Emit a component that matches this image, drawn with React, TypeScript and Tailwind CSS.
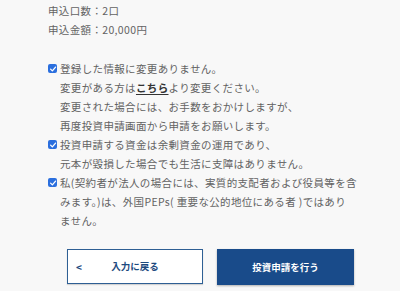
import React from 'react';

const Check = () => (
  <span className="mt-[5px] mr-[3px] flex h-[9px] w-[9px] shrink-0 items-center justify-center rounded-[2px] bg-[#2b6fde]">
    <svg viewBox="0 0 10 10" className="h-[8px] w-[8px]">
      <path d="M2 5.2 L4.2 7.4 L8.2 2.6" fill="none" stroke="#fff" strokeWidth="1.6" strokeLinecap="round" strokeLinejoin="round" />
    </svg>
  </span>
);

export default function App() {
  return (
    <div
      className="h-[291px] w-[400px] overflow-hidden bg-[#f8f8f8] pl-[48px] text-[10.5px] leading-[19px] tracking-[0.35px] text-[#636363]"
      style={{ fontFamily: '"Noto Sans CJK JP", "Noto Sans", sans-serif' }}
    >
      <div className="pt-[1px]">
        <p>申込口数：2口</p>
        <p>申込金額：20,000円</p>
      </div>

      <div className="mt-[20px]">
        <div className="flex">
          <Check />
          <div>
            <p>登録した情報に変更ありません。</p>
            <p>
              変更がある方は
              <a className="font-semibold text-[#333] underline underline-offset-2">こちら</a>
              より変更ください。
            </p>
            <p>変更された場合には、お手数をおかけしますが、</p>
            <p>再度投資申請画面から申請をお願いします。</p>
          </div>
        </div>
        <div className="flex">
          <Check />
          <div>
            <p>投資申請する資金は余剰資金の運用であり、</p>
            <p>元本が毀損した場合でも生活に支障はありません。</p>
          </div>
        </div>
        <div className="flex">
          <Check />
          <div>
            <p className="whitespace-nowrap">私(契約者が法人の場合には、実質的支配者および役員等を含</p>
            <p className="whitespace-nowrap">みます。)は、外国PEPs( 重要な公的地位にある者 )ではあり</p>
            <p>ません。</p>
          </div>
        </div>
      </div>

      <div className="mt-[19px] flex gap-[14px] pl-[19px]">
        <button className="relative flex h-[35px] w-[136px] items-center justify-center border border-[#2e5f94] bg-white text-[9.5px] font-bold tracking-normal text-[#1d4a7e] shadow-[0_1px_1px_rgba(0,0,0,0.15)]">
          <span className="absolute left-[8px] text-[10px]">&lt;</span>
          入力に戻る
        </button>
        <button className="flex h-[36px] w-[137px] items-center justify-center bg-[#194b8a] text-[9.5px] font-bold tracking-normal text-white shadow-[0_1px_2px_rgba(0,0,0,0.3)]">
          投資申請を行う
        </button>
      </div>
    </div>
  );
}
